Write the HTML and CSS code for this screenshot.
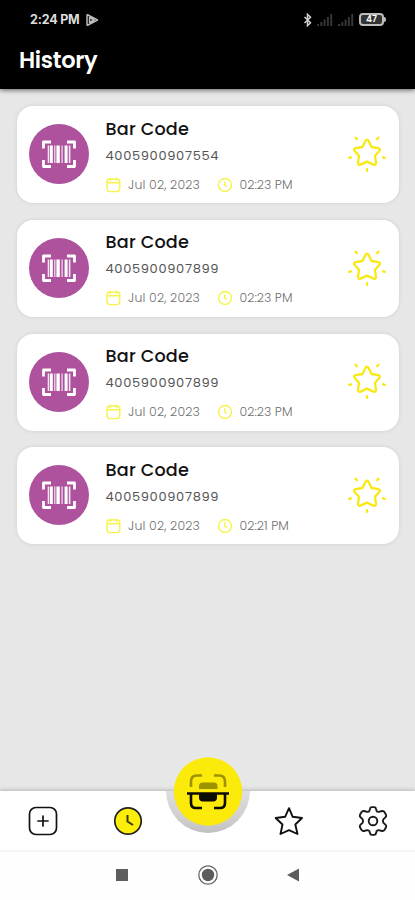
FILE: index.html
```
<!DOCTYPE html>
<html lang="en">
<head>
<meta charset="utf-8">
<title>History</title>
<link rel="stylesheet" href="styles.css">
</head>
<body>
<svg class="defs" aria-hidden="true">
  <symbol id="barcode" viewBox="0 0 60 60">
    <g fill="none" stroke="#fff" stroke-width="2.8" stroke-linejoin="round">
      <path d="M14.5 24.500V18H22M38 18H45.500V24.500M45.500 36V42.500H38M22 42.500H14.500V36"/>
    </g>
    <g fill="#fff">
      <path fill-opacity=".85" d="M18.700 21.500h1.600v17.500h-1.600zM25.200 21.500h1.200v17.500h-1.200zM32.500 21.500h1.200v17.500h-1.200zM39.800 21.500h1.600v17.500h-1.600z"/>
      <path d="M21 21.500h2.800v17.500H21zM27.400 21.500h3.400v17.500h-3.400zM35.600 21.500h3v17.500h-3z"/>
    </g>
  </symbol>
  <symbol id="calendar" viewBox="0 0 16 16">
    <g fill="none" stroke="#f7f34a" stroke-width="1.400" stroke-linecap="round">
      <rect x="1" y="2" width="12.800" height="12.600" rx="3"/>
      <path d="M1.500 5.700H13.500M4.300 1.300V3.500M10.500 1.300V3.500"/>
    </g>
  </symbol>
  <symbol id="clock" viewBox="0 0 16 16">
    <g fill="none" stroke="#f7f34a" stroke-width="1.400" stroke-linecap="round">
      <circle cx="8" cy="8" r="6.500"/>
      <path d="M7.800 4.800V8.300L9.500 9.200"/>
    </g>
  </symbol>
  <symbol id="shine" viewBox="0 0 40 40">
    <g fill="none" stroke="#f9e912" stroke-width="2.300" stroke-linejoin="round" stroke-linecap="round">
      <path d="M20 5.600Q21 5.600 21.600 6.900L24.600 13L31.300 14.100Q34 15 32.300 16.900L28 21.800L29 28.800Q29 31.400 26.500 30.600L20 27.600L13.500 30.600Q11 31.400 11 28.800L12 21.800L7.700 16.900Q6 15 8.700 14.100L15.400 13L18.400 6.900Q19 5.600 20 5.600Z"/>
      <path d="M8.600 3.700L9.900 5.200M31.400 3.700L30.100 5.200M2.300 23.800L3.900 23.300M37.700 23.800L36.100 23.300M20 35.200V36.900"/>
    </g>
  </symbol>
  <symbol id="signal" viewBox="0 0 16 12">
    <path fill="#363636" d="M0 10h2v2H0zM3.300 8h2v4h-2zM6.600 5.500h2V12h-2zM9.900 3h2v9h-2zM13.200 0h2v12h-2z"/>
  </symbol>
</svg>
<div class="screen">
  <header class="header">
    <div class="status">
      <span class="status-time">2:24 PM</span>
      <svg class="play" viewBox="0 0 14 14"><path d="M2 1.500V12.500M2 1.500L12.500 7L2 12.500M4.500 4.500V9.500L9 7Z" fill="none" stroke="#bbb" stroke-width="1.500" stroke-linejoin="round"/></svg>
      <svg class="bluetooth" viewBox="0 0 8 14"><path d="M1 4L7 9.700L4 12.700V1.300L7 4.300L1 10" fill="none" stroke="#d0d0d0" stroke-width="1.500"/></svg>
      <svg class="signal"><use href="#signal"/></svg>
      <svg class="signal"><use href="#signal"/></svg>
      <span class="battery">47</span>
    </div>
    <h1 class="title">History</h1>
  </header>
  <main class="list">
    <article class="card">
      <svg class="avatar"><use href="#barcode"/></svg>
      <div class="info">
        <h2 class="name">Bar Code</h2>
        <p class="number">4005900907554</p>
        <div class="meta"><svg class="mini"><use href="#calendar"/></svg><span class="date">Jul 02, 2023</span><svg class="mini"><use href="#clock"/></svg><span class="time">02:23 PM</span></div>
      </div>
      <svg class="favorite"><use href="#shine"/></svg>
    </article>
    <article class="card">
      <svg class="avatar"><use href="#barcode"/></svg>
      <div class="info">
        <h2 class="name">Bar Code</h2>
        <p class="number">4005900907899</p>
        <div class="meta"><svg class="mini"><use href="#calendar"/></svg><span class="date">Jul 02, 2023</span><svg class="mini"><use href="#clock"/></svg><span class="time">02:23 PM</span></div>
      </div>
      <svg class="favorite"><use href="#shine"/></svg>
    </article>
    <article class="card">
      <svg class="avatar"><use href="#barcode"/></svg>
      <div class="info">
        <h2 class="name">Bar Code</h2>
        <p class="number">4005900907899</p>
        <div class="meta"><svg class="mini"><use href="#calendar"/></svg><span class="date">Jul 02, 2023</span><svg class="mini"><use href="#clock"/></svg><span class="time">02:23 PM</span></div>
      </div>
      <svg class="favorite"><use href="#shine"/></svg>
    </article>
    <article class="card">
      <svg class="avatar"><use href="#barcode"/></svg>
      <div class="info">
        <h2 class="name">Bar Code</h2>
        <p class="number">4005900907899</p>
        <div class="meta"><svg class="mini"><use href="#calendar"/></svg><span class="date">Jul 02, 2023</span><svg class="mini"><use href="#clock"/></svg><span class="time">02:21 PM</span></div>
      </div>
      <svg class="favorite"><use href="#shine"/></svg>
    </article>
  </main>
  <nav class="tabs">
    <svg class="tab" viewBox="0 0 30 30"><g fill="none" stroke="#111" stroke-width="1.700" stroke-linecap="round"><rect x="1.500" y="1.500" width="27" height="27" rx="6.500"/><path d="M15 10V20M10 15H20"/></g></svg>
    <svg class="tab" viewBox="0 0 30 30"><circle cx="15" cy="15" r="13.200" fill="#fcee0b" stroke="#222" stroke-width="1.700"/><path d="M14.500 9V15.500L20 19" fill="none" stroke="#3c3800" stroke-width="2"/></svg>
    <div class="tab-gap"></div>
    <svg class="tab" viewBox="0 0 30 30"><path d="M15 2.200L18.700 10.800L28 12L21.300 18.500L23.500 28L15 24.100L6.500 28L8.500 18.500L1.700 12L11.100 10.800Z" fill="none" stroke="#111" stroke-width="1.900" stroke-linejoin="round"/></svg>
    <svg class="tab" viewBox="0 0 30 30"><g fill="none" stroke="#1c1c1c" stroke-width="1.900" stroke-linejoin="round"><path d="M12 2.700Q12.300 1.100 13.800 1.100H16.200Q17.700 1.100 18 2.700L18.500 4.600Q19 6 20.700 5.900L24 5Q25.700 4.700 26.600 6.200L28 8.700Q28.700 10.100 27.500 11.300L25.500 13.100Q24.300 15 25.500 16.900L27.500 18.700Q28.700 19.900 28 21.300L26.600 23.800Q25.700 25.300 24 25L20.700 24.100Q19 24 18.500 25.400L18 27.300Q17.700 28.900 16.200 28.900H13.800Q12.300 28.900 12 27.300L11.500 25.400Q11 24 9.300 24.100L6 25Q4.300 25.300 3.400 23.800L2 21.300Q1.300 19.900 2.500 18.700L4.500 16.900Q5.700 15 4.500 13.100L2.500 11.300Q1.300 10.100 2 8.700L3.400 6.200Q4.300 4.700 6 5L9.300 5.900Q11 6 11.500 4.600Z"/><circle cx="15" cy="15" r="4.300"/></g></svg>
    <svg class="scan" viewBox="0 0 90 80">
      <defs>
        <linearGradient id="notch" x1="0" y1="0" x2="0" y2="1"><stop offset="0" stop-color="#dedede"/><stop offset=".65" stop-color="#cfcfcf"/><stop offset="1" stop-color="#c0c0c0"/></linearGradient>
      </defs>
      <path d="M3 36A42 42 0 0 0 87 36Z" fill="url(#notch)"/>
      <circle cx="45" cy="36.500" r="34.200" fill="#fcea0a"/>
      <g fill="none" stroke="#9d9200" stroke-width="2.600"><path d="M28 32V26.500Q28 20.500 34 20.500H39M51 20.500H56Q62 20.500 62 26.500V32"/></g>
      <path d="M36 34V31Q36 27.500 39.500 27.500H51Q54.500 27.500 54.500 31V34Z" fill="#9d9200"/>
      <path d="M24 38.500H66M28 39V48Q28 53 33 53H39M51 53H57Q62 53 62 48V39" fill="none" stroke="#0c0c00" stroke-width="2.600"/>
      <path d="M36 39H54V42.500Q54 46.500 50 46.500H40Q36 46.500 36 42.500Z" fill="#0c0c00"/>
    </svg>
  </nav>
  <footer class="system">
    <svg class="sys" viewBox="0 0 22 22"><rect x="5" y="5" width="12" height="12" fill="#5d5d5d"/></svg>
    <svg class="sys" viewBox="0 0 22 22"><circle cx="11" cy="11" r="9.200" fill="#fff" stroke="#686868" stroke-width="1.300"/><circle cx="11" cy="11" r="6.200" fill="#5d5d5d"/></svg>
    <svg class="sys" viewBox="0 0 22 22"><path d="M4 11L16 4.500V17.500Z" fill="#5d5d5d"/></svg>
  </footer>
</div>
</body>
</html>
```

FILE: styles.css
```
* { box-sizing: border-box; margin: 0; padding: 0; }
body { font-family: Poppins, Inter, sans-serif; background: #e7e7e7; }
svg { display: block; flex: none; }
.defs { position: absolute; width: 0; height: 0; }
.screen { width: 415px; height: 900px; display: flex; flex-direction: column; overflow: hidden; background: #e7e7e7; }

.header { height: 89px; background: #000; color: #fff; box-shadow: 0 1px 5px rgba(0,0,0,.6); }
.status { height: 39px; padding: 0 29px 0 30px; display: flex; align-items: center; }
.status-time { width: 55px; font-family: Inter, sans-serif; font-size: 12.5px; font-weight: 700; color: #dedede; letter-spacing: -.2px; white-space: nowrap; }
.play { width: 14px; height: 14px; margin-right: auto; }
.bluetooth { width: 9px; height: 14px; margin-right: 5px; }
.signal { width: 16px; height: 12px; margin-right: 5px; }
.battery { position: relative; width: 25px; height: 13px; margin: 0 2px 0 0; border: 2px solid #bdbdbd; border-radius: 4px; background: #333; color: #fff; font-size: 9px; font-weight: 600; line-height: 9px; text-align: center; }
.battery::after { content: ""; position: absolute; right: -4px; top: 2px; width: 2px; height: 5px; background: #bdbdbd; border-radius: 0 2px 2px 0; }
.title { padding-left: 19px; font-size: 22.500px; line-height: 43px; font-weight: 600; letter-spacing: -.3px; }

.list { flex: 1; padding: 17.400px 16px 0 17px; display: flex; flex-direction: column; gap: 16.600px; }
.card { height: 97px; padding: 0 12px; display: flex; border-radius: 16px; background: #fff; box-shadow: 0 0 4px rgba(0,0,0,.1); }
.avatar { width: 60px; height: 60px; margin-top: 18px; border-radius: 50%; background: #ae529e; }
.info { flex: 1; padding: 10.500px 0 0 16.500px; }
.name { font-size: 17.600px; line-height: 24px; font-weight: 500; color: #111; letter-spacing: .2px; }
.number { margin-top: 5px; font-size: 13px; line-height: 20px; color: #555; letter-spacing: .65px; }
.meta { margin-top: 9px; display: flex; align-items: center; height: 20px; font-size: 12.500px; font-weight: 300; color: #707070; letter-spacing: .15px; white-space: nowrap; }
.mini { width: 16px; height: 16px; }
.date { width: 82px; margin-left: 6.500px; }
.date + .mini { margin-left: 7px; }
.time { margin-left: 6.500px; letter-spacing: .05px; }
.favorite { width: 40px; height: 40px; margin-top: 27.600px; }

.tabs { position: relative; height: 59px; padding: 0 27px 0 28px; display: flex; align-items: center; justify-content: space-between; background: #fff; box-shadow: 0 -1px 4px rgba(0,0,0,.22); }
.tab { width: 30px; height: 30px; }
.tab-gap { width: 22px; }
.scan { position: absolute; left: 163px; top: -36px; width: 90px; height: 80px; }
.system { height: 50px; padding-left: 1px; display: flex; align-items: center; justify-content: center; gap: 64px; background: #fefefe; }
.sys { width: 22px; height: 22px; }
```
